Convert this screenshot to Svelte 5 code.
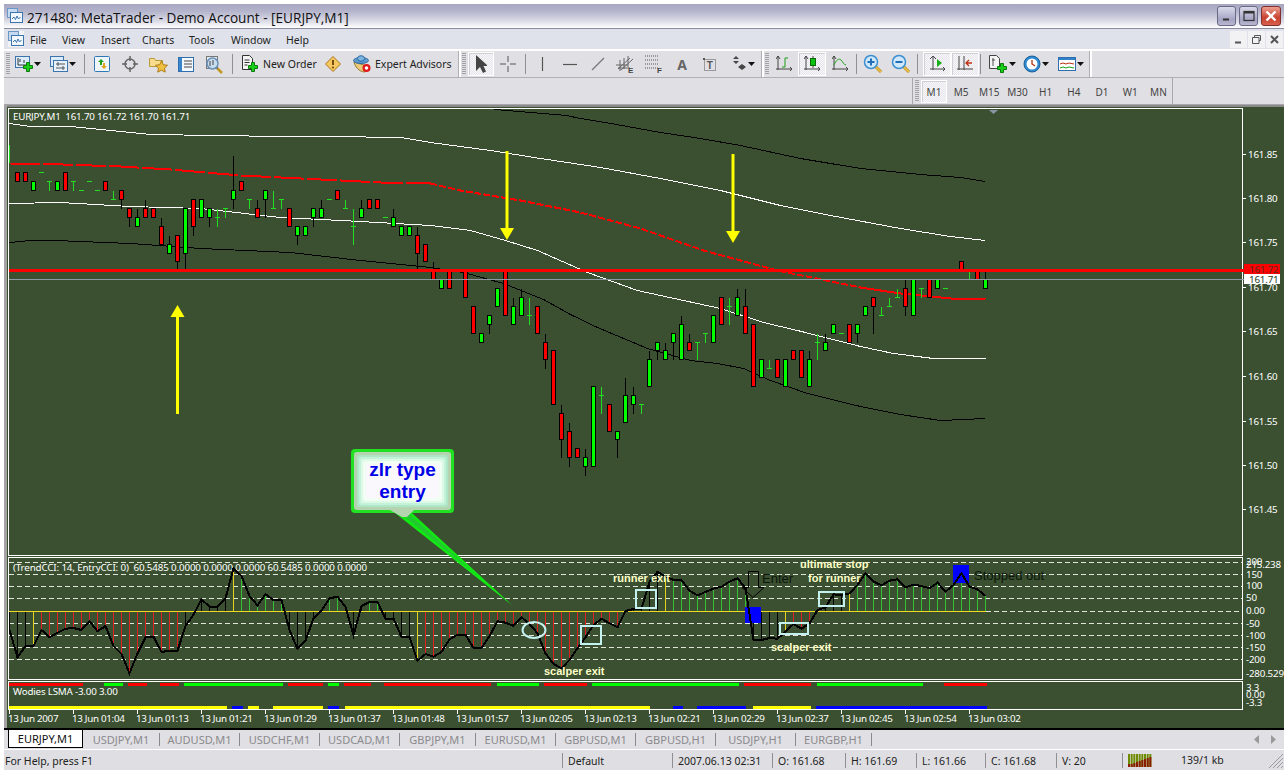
<script>
  const py = (k) => Math.round(154.6 + 8.9 * k) + 0.5;
  const raw = [
    ['r',2,3],['r',2,3],['g',3,4],['d',2,2,2],['d',3,4,3],['g',3,4],['r',2,4],['d',3,4,3],['d',4,4,4],['d',3,3,3],['d',4,4,4],['r',3,4],['d',4,5,5],
    ['r',4,5,4,6],['r',6,7,6,8],['g',7,8,6,8],['r',6,7,5,7],['r',6,7],['r',8,10,7,10],['g',10,11,9,11],['r',9,12,9,13],['g',6,11,6,13],['r',5,8,5,9],
    ['g',5,7],['g',6,7,6,8],['d',6,8,7],['d',6,7,6],['g',4,5,0,6],['r',3,4],['d',5,6,5],['r',6,7,5,7],['g',4,5,4,7],['d',4,6,6],['d',5,6,5],['r',6,8],
    ['g',8,9,8,10],['g',8,9],['g',6,7,6,8],['g',6,7,5,7],['d',5,5,5],['r',4,5],['d',5,6,6],['d',6,10,8],['g',6,7,5,7],['r',5,6],['r',5,6],['d',7,7,7],
    ['g',7,8,6,8],['g',8,9],['g',8,9],['r',9,11,8,13],['r',10,12],
    ['r',13,14,12,14],['g',14,15],['r',13,15],['d',14,14,14],['r',13,16],['r',17,20],['g',20,21],['g',18,19,18,20],['g',15,17],['r',13,18],['g',17,19,16,19],
    ['g',16,18,15,18],['d',16,19,18],['r',17,20],['r',21,23,20,24],['r',22,28],['r',29,32,28,34],['r',31,34,30,35],['r',33,34],['g',34,35,33,36],['g',26,35],
    ['d',26,29,27],['r',28,31],['g',31,32,31,34],['g',27,30,25,30],['g',27,28,26,29],['d',28,29,28],['g',23,26,22,26],['g',21,22,21,23],['g',22,23,21,23],
    ['g',20,21,20,23],['g',19,23,18,23],['r',21,22,20,22],['d',21,23,21],['d',20,21,20],['g',18,21],['r',16,19],['d',16,19,17],['g',16,18,15,18],['r',17,20,15,20],
    ['r',19,26],['g',23,25],['d',23,24,24],['r',23,25],['g',23,26],['r',22,23],['r',22,25],['g',23,26,22,26],['d',20,23,21],['g',21,22,20,22],['g',19,20],
    ['d',20,20,20],['r',19,21],['g',19,20,19,21],['g',17,18],['r',16,17,16,20],['d',17,18,18],['d',16,17,17],['d',15,16,16],['r',15,17,14,18],['g',14,18],
    ['d',15,16,15],['r',14,16],['g',14,15],['d',15,15,15],['d',14,14,14],['r',12,13],['d',13,14,14],['r',13,14],['g',14,15,13,15]
  ];
  const candles = raw.map((c, i) => {
    const cx = 17 + 8 * i;
    if (c[0] === 'd') return { cx, d: true, t: py(c[1]), b: py(c[2]), m: py(c[3]) };
    return { cx, fill: c[0] === 'r' ? '#ff0000' : '#00ff00', t: py(c[1]), b: py(c[2]), wt: py(c[3] ?? c[1]), wb: py(c[4] ?? c[2]) };
  });
  const pts = (a) => a.map((p) => p.join(',')).join(' ');
  const blackTop = pts([[494,109],[530,112],[566,115],[580,118],[616,124],[660,132],[700,138],[740,145],[800,158],[860,168],[920,174],[960,177],[985,181]]);
  const whiteTop = pts([[9,123],[30,126],[70,126],[110,130],[150,134],[215,135],[280,136],[330,136],[400,137],[430,142],[490,150],[540,158],[600,167],[660,178],[720,190],[780,205],[830,215],[900,228],[950,236],[985,240]]);
  const redA = pts([[10,163],[62,164],[120,166],[170,169],[240,175],[300,178],[380,182],[430,183]]);
  const redB = pts([[430,183],[460,190],[520,200],[580,212],[640,228],[703,250],[777,270],[860,287]]);
  const redC = pts([[860,287],[900,293],[950,298],[985,299]]);
  const whiteMid = pts([[9,203],[60,202],[130,206],[200,208],[280,217],[360,221],[430,225],[470,230],[505,240],[537,250],[587,272],[637,290],[683,300],[720,308],[763,322],[797,330],[860,346],[893,353],[933,358],[985,358]]);
  const blackLow = pts([[9,242],[30,240],[55,240],[130,243],[200,248],[290,252],[360,260],[400,264],[430,267],[463,272],[503,283],[543,299],[570,314],[597,327],[647,348],[690,360],[717,363],[743,368],[770,380],[807,393],[860,406],[900,414],[940,420],[985,418]]);
  const priceLabels = [['161.85',154],['161.80',198],['161.75',242],['161.70',287],['161.65',331],['161.60',376],['161.55',421],['161.50',465],['161.45',509]];

  const cciZ = [240,322,288,288,240,262,248,236,234,240,214,244,228,288,312,370,310,262,260,306,302,302,228,194,148,170,170,145,55,78,138,166,133,150,150,240,296,272,205,182,145,140,170,256,168,156,156,206,206,260,260,332,312,
    320,306,268,254,254,294,294,258,214,218,228,202,222,250,310,342,355,330,295,262,225,206,220,232,183,177,176,95,65,80,90,90,122,136,126,116,110,95,85,115,270,270,264,266,245,222,236,220,180,172,133,136,130,105,
    70,95,106,92,88,112,104,108,115,98,125,105,70,110,118,138];
  const zeroY = 611.5;
  const cciY = (z) => 550 + z / 3;
  const cciLine = cciZ.map((z, j) => `${9.5 + 8 * j},${cciY(z).toFixed(1)}`).join(' ');
  const barColor = (j) => {
    if (j === 3 || j === 28 || j === 51 || j === 82 || j === 97 || j === 105) return '#e6d21e';
    if ((j >= 4 && j <= 21) || (j >= 52 && j <= 76) || (j >= 98 && j <= 100)) return '#e02020';
    if ((j >= 29 && j <= 34) || j === 40 || j === 41 || j === 45 || j === 46 || (j >= 83 && j <= 92) || j >= 106) return '#35c035';
    return '#000000';
  };
  const hist = cciZ.map((z, j) => ({ x: 9.5 + 8 * j, y: cciY(z), c: barColor(j) }));
  const levels = [562, 574, 586, 598, 623, 635, 647, 659];
  const cciLabels = [['200',565],['215.238',568],['150',578],['100',589],['50',601],['0.00',614],['-50',627],['-100',639],['-150',651],['-200',663],['-280.529',677]];
  const boxes = [[635.5,589.5,20,18],[580.5,625.5,20,18],[779.5,622.5,28,11],[818.5,591.5,25,14]];
  const lsmaTop = [[9,83,'r'],[104,123,'g'],[128,147,'r'],[160,179,'r'],[184,283,'g'],[288,323,'r'],[328,339,'g'],[344,371,'r'],[384,491,'r'],[497,539,'g'],[544,587,'r'],[592,739,'g'],[744,811,'r'],[817,923,'g'],[944,987,'r']];
  const lsmaBot = [[9,227,'y'],[232,243,'b'],[248,259,'y'],[273,323,'y'],[328,339,'b'],[345,650,'y'],[673,683,'b'],[697,746,'b'],[753,811,'y'],[816,987,'b']];
  const lsmaCol = { r: '#ff0000', g: '#00ff00', y: '#ffff00', b: '#0000ff' };
  const times = ['13 Jun 2007','13 Jun 01:04','13 Jun 01:13','13 Jun 01:21','13 Jun 01:29','13 Jun 01:37','13 Jun 01:48','13 Jun 01:57','13 Jun 02:05','13 Jun 02:13','13 Jun 02:21','13 Jun 02:29','13 Jun 02:37','13 Jun 02:45','13 Jun 02:54','13 Jun 03:02'];
  const bands = [['#22e022',0,4],['#b4d4b0',3,3],['#aee6c8',6,3],['#c4f2d8',8,3],['#dcfae6',10,3],['#f2fdf4',12,3],['#fbf8fd',15,4]];
  const tabs = ['USDJPY,M1','AUDUSD,M1','USDCHF,M1','USDCAD,M1','GBPJPY,M1','EURUSD,M1','GBPUSD,M1','GBPUSD,H1','USDJPY,H1','EURGBP,H1'];
  const periods = ['M1','M5','M15','M30','H1','H4','D1','W1','MN'];
  const menu = ['File','View','Insert','Charts','Tools','Window','Help'];
  const conn = [3,3,4,5,6,7,8,9,10];
</script>

{#snippet mt()}
  <svg class="ic" width="16" height="16" viewBox="0 0 16 16"><rect x=".5" y=".5" width="10" height="9" fill="#c5daf0" stroke="#6b97c4"/><rect x="3.5" y="4.5" width="12" height="10" fill="#f0f7ff" stroke="#3d74ab"/><path d="M5 11l2-2 1.500 2.500L10 8l1.500 3 2-2" fill="none" stroke="#3d74ab"/></svg>
{/snippet}
{#snippet plus(x, y)}
  <path d={`M${x+3.500} ${y+.5}h3v3h3v3h-3v3h-3v-3h-3v-3h3z`} fill="#18d018" stroke="#0a7a0a"/>
{/snippet}
{#snippet arrow()}
  <svg class="ar" width="7" height="4" viewBox="0 0 7 4"><path d="M0 0h7L3.500 4z" fill="#111"/></svg>
{/snippet}
{#snippet lens(sign)}
  <svg class="ic" width="20" height="20" viewBox="0 0 20 20"><path d="M12 12l6 6" stroke="#b8860b" stroke-width="3"/><path d="M12 12l6 6" stroke="#f0c850" stroke-width="1.500"/><circle cx="8" cy="8" r="6.500" fill="#cfe8fb" stroke="#3d8fd0" stroke-width="1.500"/><path d={sign === '+' ? 'M4.500 8h7M8 4.500v7' : 'M4.500 8h7'} stroke="#1f6fb8" stroke-width="2"/></svg>
{/snippet}

<div class="app">
  <header class="title">
    {@render mt()}
    <span class="title-text">271480: MetaTrader - Demo Account - [EURJPY,M1]</span>
    <div class="win-btns">
      <button class="wb"><svg width="10" height="10" viewBox="0 0 10 10"><path d="M1 8.500h6" stroke="#333" stroke-width="2"/></svg></button>
      <button class="wb"><svg width="12" height="12" viewBox="0 0 12 12"><rect x="1" y="1.500" width="10" height="9" fill="none" stroke="#333" stroke-width="1.200"/><path d="M1 2.500h10" stroke="#333" stroke-width="2"/></svg></button>
      <button class="wb close"><svg width="12" height="12" viewBox="0 0 12 12"><path d="M1.500 1.500l9 9M10.500 1.500l-9 9" stroke="#fff" stroke-width="2.400"/></svg></button>
    </div>
  </header>

  <nav class="menu">
    <span class="menu-ic">{@render mt()}</span>
    <div class="menu-items">{#each menu as m}<span>{m}</span>{/each}</div>
    <div class="mdi">
      <span class="mb"><svg width="9" height="9" viewBox="0 0 9 9"><path d="M1 7.500h6" stroke="#555" stroke-width="2"/></svg></span>
      <span class="mb"><svg width="11" height="11" viewBox="0 0 11 11"><path d="M3.500 3V1.500h6v5H8M1.500 3.500h6.500v6H1.500z" fill="none" stroke="#555"/></svg></span>
      <span class="mb"><svg width="9" height="9" viewBox="0 0 9 9"><path d="M1 1l7 7M8 1L1 8" stroke="#555" stroke-width="2"/></svg></span>
    </div>
  </nav>

  <div class="row row1">
    <span class="grip first"></span>
    <span class="b dd">
      <svg class="ic" width="18" height="16" viewBox="0 0 18 16"><rect x=".5" y=".5" width="14" height="11" fill="#dcecfb" stroke="#3d74ab"/><path d="M3 2v7h9M5 3v3M9 4v3" stroke="#333" fill="none"/>{@render plus(8,6)}</svg>{@render arrow()}
    </span>
    <span class="b dd">
      <svg class="ic" width="18" height="16" viewBox="0 0 18 16"><rect x=".5" y=".5" width="13" height="10" fill="#dcecfb" stroke="#3d74ab"/><rect x="3.500" y="4.500" width="14" height="11" fill="#e8f2fc" stroke="#3d74ab"/><path d="M6 8h9M6 12h9M8 6v4M13 10v4" stroke="#555" fill="none"/></svg>{@render arrow()}
    </span>
    <i class="sep s-a"></i>
    <span class="b"><svg class="ic" width="16" height="16" viewBox="0 0 16 16"><rect x=".5" y=".5" width="15" height="15" rx="1" fill="#eef6fc" stroke="#2f78b5"/><path d="M6 9V6H4l3-3 3 3H8v3z" fill="#1aa01a"/><path d="M9 7v3H7l3 3 3-3h-2V7z" fill="#e0a020"/></svg></span>
    <span class="b"><svg class="ic" width="16" height="16" viewBox="0 0 16 16"><circle cx="8" cy="8" r="5" fill="none" stroke="#666" stroke-width="1.500"/><path d="M8 0v5M8 11v5M0 8h5M11 8h5" stroke="#666" stroke-width="1.500"/></svg></span>
    <span class="b"><svg class="ic" width="19" height="18" viewBox="0 0 19 18"><path d="M.5 3.500h5l1 2h7v6H.5z" fill="#f6dc8c" stroke="#b89a3a"/><path d="M12.500 6l1.800 3.700 4.200.6-3 2.800.7 4-3.700-1.900-3.700 1.900.7-4-3-2.800 4.200-.6z" fill="#f0c040" stroke="#b07a10"/></svg></span>
    <span class="b"><svg class="ic" width="16" height="15" viewBox="0 0 16 15"><rect x=".5" y=".5" width="15" height="14" fill="#f4f8fc" stroke="#2f6fb0"/><rect x="1" y="1" width="3" height="13" fill="#3a86cc"/><path d="M6 4h8M6 7h8M6 10h8" stroke="#444"/></svg></span>
    <span class="b"><svg class="ic" width="19" height="19" viewBox="0 0 19 19"><path d="M11 12l6 6" stroke="#c09820" stroke-width="2.500"/><rect x="1.500" y="1.500" width="11" height="12" fill="#e6ecf4" stroke="#777"/><circle cx="7.500" cy="8.500" r="5.500" fill="#c8dcf0" stroke="#6a90b8" stroke-width="1.500"/><path d="M5 6v5M8 5v5" stroke="#444"/></svg></span>
    <i class="sep s-b"></i>
    <span class="b order">
      <svg class="ic" width="18" height="18" viewBox="0 0 18 18"><path d="M1.500.5h7l3 3v11h-10z" fill="#f4f4f4" stroke="#333"/><path d="M3.500 5h5M3.500 7.500h5M3.500 10h3" stroke="#333"/>{@render plus(7,7)}</svg>
      <span class="btxt">New Order</span>
    </span>
    <span class="b"><svg class="ic" width="16" height="16" viewBox="0 0 16 16"><path d="M8 .5L15.500 8 8 15.500.5 8z" fill="#f6c860" stroke="#a8741a"/><path d="M8 4v5" stroke="#7a4a10" stroke-width="2"/><circle cx="8" cy="11.500" r="1.100" fill="#7a4a10"/></svg></span>
    <span class="b expert">
      <svg class="ic" width="18" height="18" viewBox="0 0 18 18"><path d="M1 7c2 8 8 10 11 10l2-6z" fill="#ebca7c" stroke="#9a7a30"/><ellipse cx="8" cy="5.500" rx="7.500" ry="3" fill="#5c9ad0" stroke="#2d6a9f"/><ellipse cx="8" cy="3.500" rx="3.500" ry="2.800" fill="#7db4e0" stroke="#2d6a9f"/><circle cx="13.500" cy="13" r="4" fill="#e01818"/><circle cx="13.500" cy="13" r="1.800" fill="#fff"/></svg>
      <span class="btxt">Expert Advisors</span>
    </span>
    <i class="tb-end a"></i>
    <span class="grip g1"></span>
    <span class="b narrow pressed"><svg class="ic" width="12" height="18" viewBox="0 0 12 18"><path d="M1 0v16l4-4 3 6 3-1.500L8.500 11H13z" fill="#444"/></svg></span>
    <span class="b"><svg class="ic" width="16" height="16" viewBox="0 0 16 16"><path d="M8 0v6M8 10v6M0 8h6M10 8h6" stroke="#555"/></svg></span>
    <i class="sep s-c"></i>
    <span class="b"><svg class="ic" width="3" height="14" viewBox="0 0 3 14"><path d="M1.500 0v14" stroke="#555" stroke-width="1.200"/></svg></span>
    <span class="b"><svg class="ic" width="14" height="3" viewBox="0 0 14 3"><path d="M0 1.500h14" stroke="#555" stroke-width="1.200"/></svg></span>
    <span class="b"><svg class="ic" width="14" height="14" viewBox="0 0 14 14"><path d="M1 13L13 1" stroke="#777" stroke-width="1.200"/></svg></span>
    <span class="b"><svg class="ic" width="20" height="18" viewBox="0 0 20 18"><path d="M2 14l12-11M5 15L17 4M0 10h12M2 13h12M4 5v11M8 3v11M12 1v11" stroke="#666" fill="none"/><text x="12" y="17.500" class="mini">E</text></svg></span>
    <span class="b"><svg class="ic" width="20" height="18" viewBox="0 0 20 18"><path d="M1 1h13M1 5h13M1 9h13M1 13h13" stroke="#555" stroke-dasharray="1 1"/><text x="13" y="17.500" class="mini">F</text></svg></span>
    <span class="b"><span class="letter">A</span></span>
    <span class="b"><svg class="ic" width="14" height="15" viewBox="0 0 14 15"><rect x="1.500" y="2.500" width="11" height="11" fill="none" stroke="#555" stroke-dasharray="1 1"/><rect y="1" width="2" height="2" fill="#555"/><text x="3.800" y="11.500" class="tt">T</text></svg></span>
    <span class="b dd2"><svg class="ic" width="16" height="16" viewBox="0 0 16 16"><path d="M5 0l3 3H2zM2 5l3 3 3-3M11 8l4 3-4 3-4-3z" fill="#444"/></svg>{@render arrow()}</span>
    <i class="tb-end"></i>
    <span class="grip g2"></span>
    <span class="b"><svg class="ic" width="16" height="16" viewBox="0 0 16 16"><path d="M2 0v14M0 13h16M0 3l2-3 2 3M14 11l2 2-2 2" stroke="#444" fill="none"/><path d="M6 11h3V2h3" stroke="#18a018" fill="none"/></svg></span>
    <span class="b pressed"><svg class="ic" width="16" height="16" viewBox="0 0 16 16"><path d="M2 0v14M0 13h16M0 3l2-3 2 3M14 11l2 2-2 2M9 0v12" stroke="#444" fill="none"/><rect x="6.500" y="2.500" width="5" height="7" fill="#0ec10e" stroke="#0a6a0a"/></svg></span>
    <span class="b"><svg class="ic" width="16" height="16" viewBox="0 0 16 16"><path d="M2 0v14M0 13h16M0 3l2-3 2 3M14 11l2 2-2 2" stroke="#444" fill="none"/><path d="M2 9c2-5 5-7 7-5s3 5 5 5" stroke="#18a018" fill="none"/></svg></span>
    <i class="sep s-d"></i>
    <span class="b">{@render lens('+')}</span>
    <span class="b">{@render lens('-')}</span>
    <i class="sep s-e"></i>
    <span class="b pressed"><svg class="ic" width="16" height="16" viewBox="0 0 16 16"><path d="M4 0v14M1 13h15M1 3l3-3 3 3M14 11l2 2-2 2" stroke="#444" fill="none"/><path d="M8 3l5 4-5 4z" fill="#18b018"/></svg></span>
    <span class="b pressed"><svg class="ic" width="16" height="16" viewBox="0 0 16 16"><path d="M2 0v14M7 0v14M0 13h16" stroke="#444" fill="none"/><path d="M9 7h6M12 4l-3 3 3 3" stroke="#c03010" stroke-width="1.300" fill="none"/></svg></span>
    <i class="sep s-f"></i>
    <span class="b dd3"><svg class="ic" width="20" height="20" viewBox="0 0 20 20"><path d="M1.500 1.500h7l3 3v10h-10z" fill="#f4f4f4" stroke="#444"/><path d="M5 4v8M4 6h3" stroke="#555"/>{@render plus(9,9)}</svg>{@render arrow()}</span>
    <span class="b dd3"><svg class="ic" width="18" height="18" viewBox="0 0 18 18"><circle cx="9" cy="9" r="8" fill="#2f8ad0" stroke="#1b5f9a"/><circle cx="9" cy="9" r="5.500" fill="#fff"/><path d="M9 5v4l3 2" stroke="#b03010" stroke-width="1.300" fill="none"/></svg>{@render arrow()}</span>
    <span class="b dd3"><svg class="ic" width="18" height="14" viewBox="0 0 18 14"><rect x=".5" y=".5" width="17" height="13" fill="#fff" stroke="#2f6fb0"/><rect x="1" y="1" width="16" height="2" fill="#2f80c8"/><path d="M2 7l3-1 3 1 3-1 5 1" stroke="#c03010" fill="none"/><path d="M2 11l3-1 3 1 3-1 5 1" stroke="#18a018" fill="none"/></svg>{@render arrow()}</span>
    <i class="tb-end"></i>
  </div>

  <div class="row row2">
    <div class="periods">
      <span class="grip g3"></span>
      {#each periods as p, i}<span class="per" class:pressed={i === 0}>{p}</span>{/each}
    </div>
  </div>

  <svg class="chart" width="1280" height="623" viewBox="4 105 1280 623">
    <rect x="4" y="105" width="1280" height="623" fill="#3a5030"/>
    <rect x="4" y="105" width="1280" height="2" fill="#8a8a8a"/>
    <rect x="4" y="105" width="3" height="623" fill="#a4a4a4"/>
    <rect x="8.500" y="108.500" width="1234" height="447" class="frame"/>
    <rect x="8.500" y="557.500" width="1234" height="122" class="frame"/>
    <rect x="8.500" y="681.500" width="1234" height="28" class="frame"/>
    <path d="M989 110h9l-4.500 4z" fill="#8a94a4"/>
    <text x="13" y="119.500" class="t">EURJPY,M1  161.70 161.72 161.70 161.71</text>

    <g class="crisp" fill="none" transform="translate(.5 .5)">
      <polyline points={blackTop} stroke="#000"/>
      <polyline points={whiteTop} stroke="#fff"/>
      <polyline points={redA} stroke="#f00" stroke-width="2" stroke-dasharray="30 3"/>
      <polyline points={redB} stroke="#f00" stroke-width="2" stroke-dasharray="7 2"/>
      <polyline points={redC} stroke="#f00" stroke-width="2"/>
      <polyline points={whiteMid} stroke="#fff"/>
      <polyline points={blackLow} stroke="#000"/>
    </g>

    <path d="M9.500 145v18" stroke="#22dd22" class="crisp"/>
    <g class="crisp">
      {#each candles as c}
        {#if c.d}
          <path d={`M${c.cx + .5} ${c.t}V${c.b}M${c.cx - 2} ${c.m}h5`} stroke="#22dd22" fill="none"/>
        {:else}
          <path d={`M${c.cx + .5} ${c.wt}V${c.wb}`} stroke="#000"/>
          <rect x={c.cx - 1.500} y={c.t} width="4" height={c.b - c.t} fill={c.fill} stroke="#000"/>
        {/if}
      {/each}
    </g>

    <path d="M9 279.500h1235" stroke="#8d9aa6" class="crisp"/>
    <rect x="9" y="269" width="1235" height="3" fill="#ff0000"/>

    {#each priceLabels as [l, yy]}
      <path d={`M1243 ${yy + .5}h3`} stroke="#fff" class="crisp"/>
      <text x="1248" y={yy + 4} class="t">{l}</text>
    {/each}
    <rect x="1244" y="264" width="36" height="10" fill="#ff0000"/>
    <rect x="1244" y="274" width="36" height="10" fill="#fff"/>
    <text x="1249" y="273" class="tag red">161.72</text>
    <text x="1249" y="283" class="tag">161.71</text>

    <g stroke="#ffff00" stroke-width="3" fill="#ffff00">
      <path d="M507 151v78"/><path d="M500 228h14l-7 12z" stroke="none"/>
      <path d="M733 154v78"/><path d="M726 231h14l-7 12z" stroke="none"/>
      <path d="M177.500 414v-98"/><path d="M170.500 317h14l-7-12z" stroke="none"/>
    </g>

    <!-- CCI panel -->
    <text x="13" y="571" class="t cc">(TrendCCI: 14, EntryCCI: 0)  60.5485 0.0000 0.0000 0.0000 60.5485 0.0000 0.0000</text>
    <g class="crisp">
      {#each levels as l}<path d={`M9 ${l + .5}H1242`} stroke="#dfe5da" stroke-dasharray="5 3"/>{/each}
      {#each hist as h}<path d={`M${h.x} ${zeroY}V${h.y}`} stroke={h.c}/>{/each}
      <path d={`M9 ${zeroY}H986`} stroke="#f0d820"/>
      <path d="M986 611.500H1242" stroke="#dfe5da" stroke-dasharray="5 3"/>
    </g>
    <rect x="745" y="607" width="16" height="16" fill="#0000ff"/>
    <rect x="953" y="565" width="16" height="18" fill="#0000ff"/>
    <polyline points={cciLine} fill="none" stroke="#000" stroke-width="2" class="crisp"/>

    <g fill="none" stroke="#c4f0f0" stroke-width="2" class="crisp">
      {#each boxes as [x, y, w, h]}<rect {x} {y} width={w} height={h}/>{/each}
    </g>
    <ellipse cx="534" cy="630" rx="11.500" ry="8" fill="none" stroke="#c4f0f0" stroke-width="2"/>

    <text x="613" y="582" class="note">runner exit</text>
    <text x="544" y="675" class="note">scalper exit</text>
    <text x="771" y="651" class="note">scalper exit</text>
    <text x="800" y="568" class="note">ultimate stop</text>
    <text x="808" y="582" class="note">for runner</text>
    <path d="M748.500 571.500h10v16h5.500l-11 10-11-10h6.500z" fill="none" stroke="#000"/>
    <text x="762" y="583" class="dark">Enter</text>
    <text x="974" y="580" class="dark">Stopped out</text>

    {#each cciLabels as [l, yy]}
      <text x="1246" y={yy} class="t">{l}</text>
    {/each}

    <!-- LSMA panel -->
    <text x="13" y="695" class="t">Wodies LSMA -3.00 3.00</text>
    <g class="crisp">
      {#each lsmaTop as [a, b, c]}<rect x={a} y="683" width={b - a} height="3" fill={lsmaCol[c]}/>{/each}
      {#each lsmaBot as [a, b, c]}<rect x={a} y="706" width={b - a} height="3" fill={lsmaCol[c]}/>{/each}
    </g>
    <text x="1246" y="691" class="t">3.3</text>
    <text x="1246" y="698" class="t">0.00</text>
    <text x="1246" y="706" class="t">-3.3</text>

    {#each times as t, i}
      <path d={`M${9.500 + 64 * i} 710v4`} stroke="#fff" class="crisp"/>
      <text x={8 + 64 * i} y="722" class="t tm">{t}</text>
    {/each}

    <!-- callout -->
    <polygon points="395,513 412,513 513,606" fill="#12e812"/>
    <polygon points="400,513 408,513 480,578" fill="#22c830"/>
    {#each bands as [c, inset, r]}
      <rect x={351 + inset} y={449 + inset} width={103 - inset * 2} height={64 - inset * 2} rx={r} fill={c}/>
    {/each}
    <polygon points="390,510 414,510 407,517 402,517" fill="#b4d4b0"/>
    <text x="402.500" y="476" class="call">zlr type</text>
    <text x="402.500" y="498" class="call">entry</text>
  </svg>

  <div class="tabs">
    <span class="tab active">EURJPY,M1</span>
    {#each tabs as t}<span class="tab">{t}</span>{/each}
    <span class="tab-nav">
      <svg width="5" height="9" viewBox="0 0 5 9"><path d="M5 0v9L0 4.500z" fill="#999"/></svg>
      <svg width="5" height="9" viewBox="0 0 5 9"><path d="M0 0v9l5-4.500z" fill="#999"/></svg>
    </span>
  </div>

  <footer class="status">
    <span class="help">For Help, press F1</span>
    <span>Default</span>
    <span>2007.06.13 02:31</span>
    <span>O: 161.68</span>
    <span>H: 161.69</span>
    <span>L: 161.66</span>
    <span>C: 161.68</span>
    <span>V: 20</span>
    <span class="last">
      <svg class="conn" width="24" height="13" viewBox="0 0 24 13">
        {#each conn as h, i}
          <rect x={i * 2.670} y="0" width="2" height="13" fill="#6e8a00"/>
          <rect x={i * 2.670} y={13 - h} width="2" height={h} fill="#8a1c00"/>
        {/each}
      </svg>
      <span class="kb">139/1 kb</span>
      <svg class="grip-r" width="16" height="16" viewBox="0 0 16 16"><path d="M15 1L1 15M15 5L5 15M15 9L9 15M15 13l-2 2" stroke="#9a9aa2"/></svg>
    </span>
  </footer>
</div>

<style>
  :global(body) { margin: 0; background: #fff; }
  .app {
    width: 1280px;
    margin: 4px 0 0 4px;
    font-family: "Noto Sans", "Liberation Sans", sans-serif;
    font-size: 10px;
    color: #222;
  }
  .ic { flex: none; display: block; }
  .ar { flex: none; margin-left: 1px; }

  .title {
    height: 24px;
    display: flex;
    align-items: center;
    padding-left: 3px;
    background: linear-gradient(#a6a6c0, #b4b4cc 30%, #dadae6 70%, #fff);
    border-bottom: 1px solid #8c8ca0;
    position: relative;
  }
  .title-text { margin-left: 4px; padding-top: 2px; font-size: 13.600px; color: #111; font-family: "Open Sans", "Noto Sans", sans-serif; }
  .win-btns { margin-left: auto; display: flex; gap: 3px; padding-right: 3px; }
  .wb {
    width: 19px; height: 20px; padding: 0; display: flex; align-items: center; justify-content: center;
    background: linear-gradient(#dadaea, #a4a4c4 70%, #b8b8d0);
    border: 1px solid #6a6a88; border-radius: 3px;
  }
  .wb.close { width: 20px; background: linear-gradient(#eea090, #c84030 60%, #d8604c); border-color: #803030; }

  .menu { height: 21px; display: flex; align-items: center; background: #dfe2ea; padding-left: 4px; border-bottom: 1px solid #fff; box-sizing: border-box; }
  .menu-ic { width: 16px; display: block; background: #f0f4f8; }
  .menu-items { display: flex; margin-left: 6px; padding-top: 1px; font-size: 10.500px; }
  .menu-items span { padding: 0 10px 0 0; }
  .menu-items span:nth-child(1) { width: 22px; }
  .menu-items span:nth-child(2) { width: 29px; }
  .menu-items span:nth-child(3) { width: 31px; }
  .menu-items span:nth-child(4) { width: 37px; }
  .menu-items span:nth-child(5) { width: 32px; }
  .menu-items span:nth-child(6) { width: 45px; }
  .mdi { margin-left: auto; display: flex; gap: 1px; padding-right: 1px; }
  .mb { width: 17px; height: 17px; background: #f2f2f4; display: flex; align-items: center; justify-content: center; }

  .row { display: flex; align-items: center; background: #e0dfe3; box-sizing: border-box; }
  .row1 { height: 28px; border-top: 1px solid #fff; border-bottom: 1px solid #b0b0b4; }
  .row2 { height: 27px; padding-left: 908px; align-items: stretch; border-bottom: 1px solid #a8a8ac; }
  .grip {
    flex: none; width: 4px; height: 22px;
    background: repeating-linear-gradient(#a2a2a6 0 1px, transparent 1px 2px);
  }
  .grip.first { margin: 0 3px 0 2px; }
  .grip.g1 { margin: 0 2px 0 1px; }
  .grip.g2 { margin: 0 1px; }
  .grip.g3 { margin: 0 2px; }
  .b { flex: none; width: 28px; height: 24px; display: flex; align-items: center; justify-content: center; box-sizing: border-box; }
  .dd { width: 35px; justify-content: flex-start; padding-left: 2px; }
  .dd2 { width: 36px; justify-content: flex-start; padding-left: 7px; }
  .dd3 { width: 35px; justify-content: flex-start; padding-left: 5px; }
  .narrow { width: 26px; }
  .pressed {
    background: #f2f2f4 repeating-conic-gradient(#e6e6ea 0 25%, #f8f8fa 0 50%) 0 0 / 2px 2px;
    border: 1px solid #fff;
    box-shadow: inset 1px 1px 0 #d0d0d4;
  }
  .order { width: 83px; justify-content: flex-start; padding-left: 5px; gap: 4px; }
  .expert { width: 106px; justify-content: flex-start; padding-left: 6px; gap: 4px; }
  .btxt { white-space: nowrap; color: #222; font-size: 10.500px; }
  .letter { font-size: 14px; color: #666; font-weight: bold; }
  .mini { font: bold 8px "Liberation Sans", sans-serif; fill: #444; }
  .tt { font: bold 10px "Liberation Sans", sans-serif; fill: #555; }
  .sep { flex: none; display: block; height: 20px; border-left: 1px solid #909094; box-sizing: border-box; }
  .s-a { width: 4px; margin-left: 1px; }
  .s-b { width: 4px; margin-left: 4px; }
  .s-c { width: 3px; margin-left: 3px; }
  .s-d { width: 3px; margin-left: 2px; }
  .s-e { width: 6px; margin-left: 2px; }
  .s-f { width: 3px; margin-left: 1px; }
  .tb-end { flex: none; display: block; width: 2px; height: 26px; margin-left: 1px; background: #fff; border-left: 1px solid #b0b0b4; }
  .tb-end.a { margin-left: 5px; }

  .periods { width: 261px; display: flex; align-items: center; border-left: 1px solid #a8a8ac; border-right: 1px solid #a8a8ac; box-sizing: border-box; color: #444; }
  .per { width: 28.200px; height: 23px; display: flex; align-items: center; justify-content: center; flex: none; box-sizing: border-box; padding-top: 1px; }
  .per.pressed { width: 26px; }

  .chart { display: block; }
  .frame { fill: none; stroke: #fff; shape-rendering: crispEdges; }
  .crisp { shape-rendering: crispEdges; }
  .t { font: 9.800px "Noto Sans", sans-serif; fill: #fff; white-space: pre; letter-spacing: -0.2px; }
  .tm { letter-spacing: -0.3px; }
  .cc { letter-spacing: -0.15px; }
  .tag { font: 9.800px "Noto Sans", sans-serif; fill: #26401e; letter-spacing: -0.2px; }
  .tag.red { fill: #5c2a20; }
  .note { font: bold 11px "Liberation Sans", sans-serif; fill: #ffffc8; }
  .dark { font: 13px "Liberation Sans", sans-serif; fill: #0c160c; }
  .call { font: bold 19px "Liberation Sans", sans-serif; fill: #0000e6; text-anchor: middle; }

  .tabs {
    height: 21px; display: grid;
    grid-auto-flow: column;
    grid-template-columns: 79px 77px 80px 80px 80px 76px 80px 80px 80px 80px 76px 1fr;
    align-items: center;
    background: #e0dfe3; border-top: 2px solid #000; box-sizing: border-box;
    font-size: 11px; color: #8a8a8e;
  }
  .tab { text-align: center; border-right: 1px solid #8a8a8a; height: 13px; line-height: 13px; box-sizing: border-box; }
  .tab.active {
    height: 18px; line-height: 17px; margin: 0 0 1px 4px; align-self: start; color: #111; background: #fff;
    border: 1px solid #000; border-top: none; box-sizing: border-box;
  }
  .tab-nav { display: flex; justify-content: flex-end; gap: 12px; padding-right: 8px; }

  .status {
    height: 21px; display: grid;
    grid-template-columns: 559px 110px 100px 73px 71px 69px 71px 66px 1fr;
    align-items: center;
    background: #dfdfe3; border-top: 1px solid #fff; box-sizing: border-box; font-size: 10.500px; color: #222;
  }
  .status > span { border-right: 1px solid #909094; height: 15px; line-height: 16px; padding-left: 5px; box-sizing: border-box; white-space: nowrap; }
  .status > span.help { padding-left: 1px; border-right: 1px solid #909094; }
  .status > span.last { border-right: none; display: flex; align-items: center; position: relative; }
  .conn { flex: none; }
  .kb { margin-left: 29px; }
  .grip-r { position: absolute; right: 0; top: 0; }
</style>
